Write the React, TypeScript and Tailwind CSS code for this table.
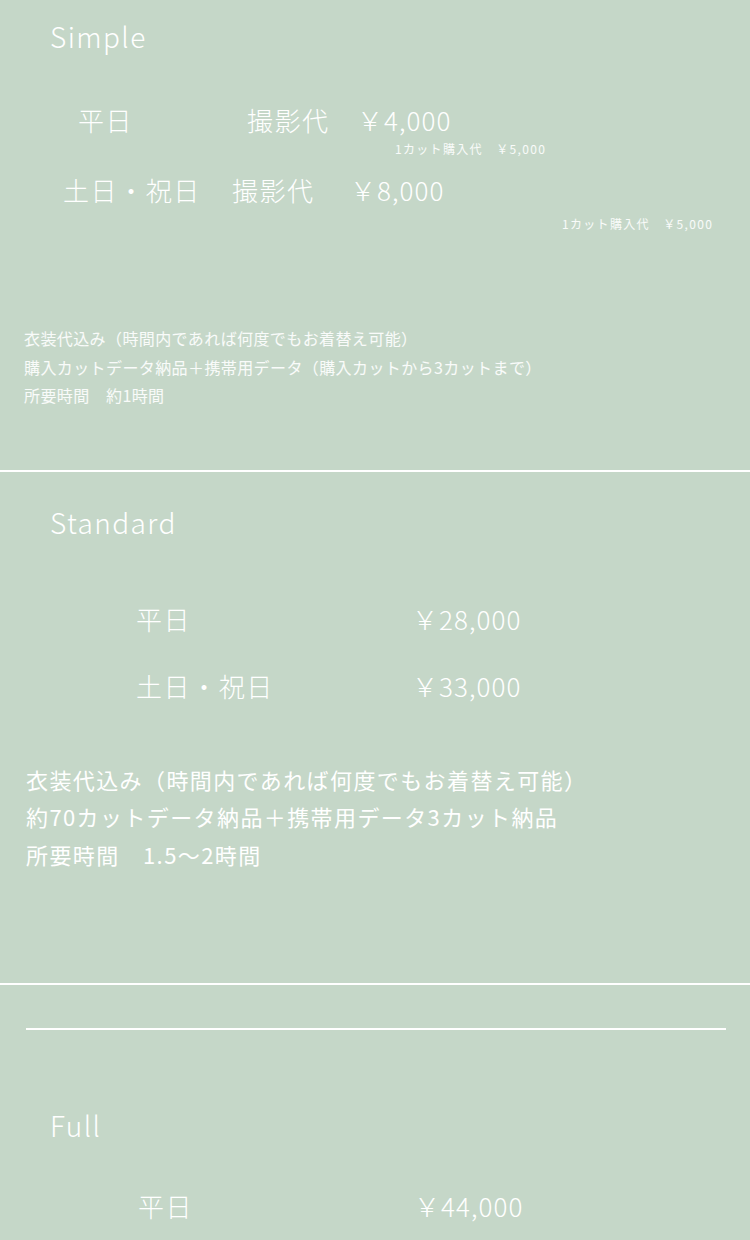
import React from 'react';

const font = "font-['Noto_Sans_CJK_JP','Noto_Sans',sans-serif]";

const Title: React.FC<{ label: string }> = ({ label }) => (
  <h2 className="pl-[50px] h-[40px] leading-[40px] text-[28px] tracking-[0.05em] font-light text-white">
    {label}
  </h2>
);

const PriceRow: React.FC<{ day: string; price: string; indent: string; className?: string }> = ({ day, price, indent, className }) => (
  <div className={`flex h-[36px] items-center leading-[36px] text-[26px] font-light text-white ${indent} ${className ?? ''}`}>
    <span className="w-[276px] tracking-[0.06em]">{day}</span>
    <span className="tracking-[0.04em]">{price}</span>
  </div>
);

const App: React.FC = () => {
  return (
    <div className={`min-h-screen w-full bg-[#c5d7c8] ${font}`}>
      {/* Simple */}
      <section className="pt-4 pb-[60px] border-b-2 border-white">
        <Title label="Simple" />

        <div className="mt-[45px] pl-[78px] flex h-[36px] items-center text-[26px] font-light text-white tracking-[0.06em]">
          <span className="w-[169px]">平日</span>
          <span className="w-[110px]">撮影代</span>
          <span className="tracking-[0.04em]">￥4,000</span>
        </div>
        <p className="mt-[3px] pl-[395px] h-[18px] leading-[18px] text-[12px] tracking-[0.11em] text-white/90">
          1カット購入代　￥5,000
        </p>

        <div className="mt-[13px] pl-[63px] flex h-[36px] items-center text-[26px] font-light text-white tracking-[0.06em]">
          <span className="w-[169px]">土日・祝日</span>
          <span className="w-[118px]">撮影代</span>
          <span className="tracking-[0.04em]">￥8,000</span>
        </div>
        <p className="mt-[8px] pl-[562px] h-[18px] leading-[18px] text-[12px] tracking-[0.11em] text-white/90">
          1カット購入代　￥5,000
        </p>

        <div className="mt-[91px] px-[24px] text-[16px] leading-[28.5px] tracking-[0.4px] text-white/90">
          <p>衣装代込み（時間内であれば何度でもお着替え可能）</p>
          <p>購入カットデータ納品＋携帯用データ（購入カットから3カットまで）</p>
          <p>所要時間　約1時間</p>
        </div>
      </section>

      {/* Standard */}
      <section className="pt-[30px] pb-[110px] border-b-2 border-white">
        <Title label="Standard" />
        <PriceRow day="平日" price="￥28,000" indent="pl-[136px]" className="mt-[59px]" />
        <PriceRow day="土日・祝日" price="￥33,000" indent="pl-[136px]" className="mt-[31px]" />

        <div className="mt-[57px] px-[26px] text-[22px] leading-[37.5px] tracking-[1.4px] text-white">
          <p>衣装代込み（時間内であれば何度でもお着替え可能）</p>
          <p>約70カットデータ納品＋携帯用データ3カット納品</p>
          <p>所要時間　1.5〜2時間</p>
        </div>
      </section>

      <div className="mt-[43px] ml-[26px] mr-[24px] h-[2px] bg-white" />

      {/* Full */}
      <section className="pt-[75px] pb-10">
        <Title label="Full" />
        <PriceRow day="平日" price="￥44,000" indent="pl-[138px]" className="mt-[43px]" />
      </section>
    </div>
  );
};

export default App;
